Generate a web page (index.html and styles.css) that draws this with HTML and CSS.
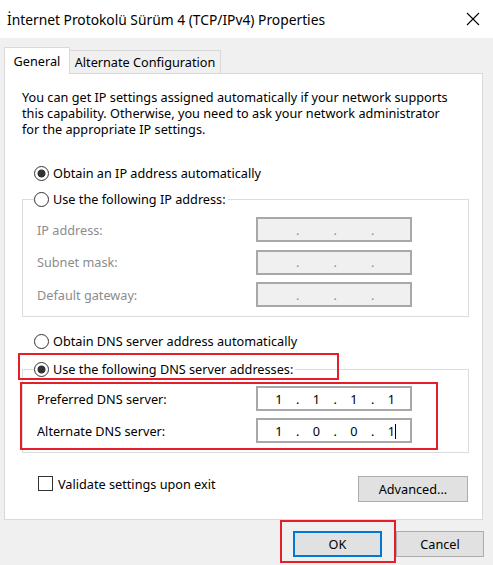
FILE: index.html
```html
<!DOCTYPE html>
<html>
<head>
<meta charset="utf-8">
<link rel="stylesheet" href="styles.css">
</head>
<body>
<div class="titlebar">
  <span class="title">İnternet Protokolü Sürüm 4 (TCP/IPv4) Properties</span>
  <svg class="close" viewBox="0 0 14 14"><path d="M1 1L13 13M13 1L1 13" stroke="#000" stroke-width="1.1" fill="none"/></svg>
</div>
<div class="tabs">
  <div class="tab tab-active">General</div>
  <div class="tab tab-other">Alternate Configuration</div>
</div>
<div class="panel">
  <p class="desc">You can get IP settings assigned automatically if your network supports<br>this capability. Otherwise, you need to ask your network administrator<br>for the appropriate IP settings.</p>
  <div class="radio-row row-ip-auto"><span class="radio checked"></span>Obtain an IP address automatically</div>
  <fieldset class="group group-ip">
    <legend class="radio-row"><span class="radio"></span>Use the following IP address:</legend>
    <div class="field-row"><span class="label disabled">IP address:</span><div class="ipbox disabled"><span class="oct"></span><span class="dot">.</span><span class="oct"></span><span class="dot">.</span><span class="oct"></span><span class="dot">.</span><span class="oct"></span></div></div>
    <div class="field-row"><span class="label disabled">Subnet mask:</span><div class="ipbox disabled"><span class="oct"></span><span class="dot">.</span><span class="oct"></span><span class="dot">.</span><span class="oct"></span><span class="dot">.</span><span class="oct"></span></div></div>
    <div class="field-row"><span class="label disabled">Default gateway:</span><div class="ipbox disabled"><span class="oct"></span><span class="dot">.</span><span class="oct"></span><span class="dot">.</span><span class="oct"></span><span class="dot">.</span><span class="oct"></span></div></div>
  </fieldset>
  <div class="radio-row row-dns-auto"><span class="radio"></span>Obtain DNS server address automatically</div>
  <fieldset class="group group-dns">
    <legend class="radio-row"><span class="radio checked"></span>Use the following DNS server addresses:</legend>
    <div class="field-row"><span class="label">Preferred DNS server:</span><div class="ipbox"><span class="oct">1</span><span class="dot">.</span><span class="oct">1</span><span class="dot">.</span><span class="oct">1</span><span class="dot">.</span><span class="oct">1</span></div></div>
    <div class="field-row"><span class="label">Alternate DNS server:</span><div class="ipbox"><span class="oct">1</span><span class="dot">.</span><span class="oct">0</span><span class="dot">.</span><span class="oct">0</span><span class="dot">.</span><span class="oct">1<span class="caret"></span></span></div></div>
  </fieldset>
  <div class="bottom-row">
    <div class="check-row"><span class="checkbox"></span>Validate settings upon exit</div>
    <div class="btn btn-adv">Advanced...</div>
  </div>
</div>
<div class="buttons">
  <div class="btn btn-ok">OK</div>
  <div class="btn btn-cancel">Cancel</div>
</div>
<div class="mark mark-radio"></div>
<div class="mark mark-fields"></div>
<div class="mark mark-ok"></div>
</body>
</html>
```

FILE: styles.css
```css
* { box-sizing: border-box; }
body {
  margin: 0;
  width: 493px;
  height: 565px;
  overflow: hidden;
  background: #f0f0f0;
  font-family: "Noto Sans", "Open Sans", sans-serif;
  font-size: 12.7px;
  color: #000;
  position: relative;
}
.titlebar {
  height: 38px;
  background: #fff;
  display: flex;
  align-items: center;
  justify-content: space-between;
  padding: 0 13px 0 7px;
}
.title { font-size: 13.8px; }
.close { width: 14px; height: 14px; display: block; }
.tabs {
  display: flex;
  align-items: flex-start;
  margin-top: 9px;
  padding-left: 4px;
  height: 26px;
  position: relative;
  z-index: 1;
}
.tab {
  display: flex;
  align-items: center;
  justify-content: center;
  border: 1px solid #d9d9d9;
  border-bottom: none;
}
.tab-active { width: 66px; height: 27px; background: #fff; }
.tab-other { width: 151px; height: 23px; margin-top: 3px; border-left: none; background: #f0f0f0; }
.panel {
  margin-left: 4px;
  width: 479px;
  height: 447px;
  background: #fff;
  border: 1px solid #d9d9d9;
}
.desc { margin: 15px 0 0 17px; line-height: 16px; }
.radio-row { display: flex; align-items: center; gap: 4px; height: 20px; }
.radio {
  width: 15px; height: 15px; border-radius: 50%;
  border: 1px solid #333; background: #fff; flex: none;
}
.radio.checked { background: radial-gradient(circle, #333 0 3.6px, #fff 4.4px); }
.row-ip-auto { margin: 26px 0 0 29px; }
.row-dns-auto { margin: 14px 0 0 29px; }
.group {
  margin: 0 0 0 17px;
  width: 447px;
  min-width: 0;
  border: 1px solid #dcdcdc;
  padding: 8px 0 9px 14px;
  display: flex;
  flex-direction: column;
}
.group legend { padding: 0 2px 0 0; margin-left: -3px; }
.group-ip { margin-top: 6px; gap: 7.5px; }
.group-dns { margin-top: 8px; padding-top: 7px; gap: 7px; }
.field-row { display: flex; align-items: center; height: 25px; }
.label { width: 219px; }
.disabled { color: #8c8c8c; }
.ipbox {
  width: 156px; height: 25px;
  border: 2px solid #a8a8a8;
  background: #fff;
  display: flex; align-items: center;
  padding-left: 5px;
}
.ipbox.disabled { background: #f0f0f0; color: #8c8c8c; }
.oct { width: 32px; text-align: center; }
.dot { width: 5.5px; text-align: center; }
.caret { display: inline-block; width: 1px; height: 15px; background: #000; margin-right: -1px; vertical-align: -3px; }
.bottom-row {
  display: flex; justify-content: space-between; align-items: flex-start;
  margin: 23px 14px 0 33px;
}
.check-row { display: flex; align-items: center; gap: 5px; height: 15px; }
.checkbox { width: 15px; height: 15px; border: 1px solid #333; background: #fff; }
.btn {
  height: 26px; background: #e1e1e1; border: 1px solid #adadad;
  display: flex; align-items: center; justify-content: center;
}
.btn-adv { width: 110px; }
.buttons { display: flex; justify-content: flex-end; gap: 14px; padding-right: 9px; margin-top: 11px; }
.btn-ok { width: 89px; border: 2px solid #0078d7; }
.btn-cancel { width: 88px; }
.mark { position: absolute; border: 2px solid #e3202a; }
.mark-radio { left: 18px; top: 353px; width: 321px; height: 27px; }
.mark-fields { left: 20px; top: 382px; width: 418px; height: 68px; }
.mark-ok { left: 280px; top: 520px; width: 116px; height: 43px; }
```
